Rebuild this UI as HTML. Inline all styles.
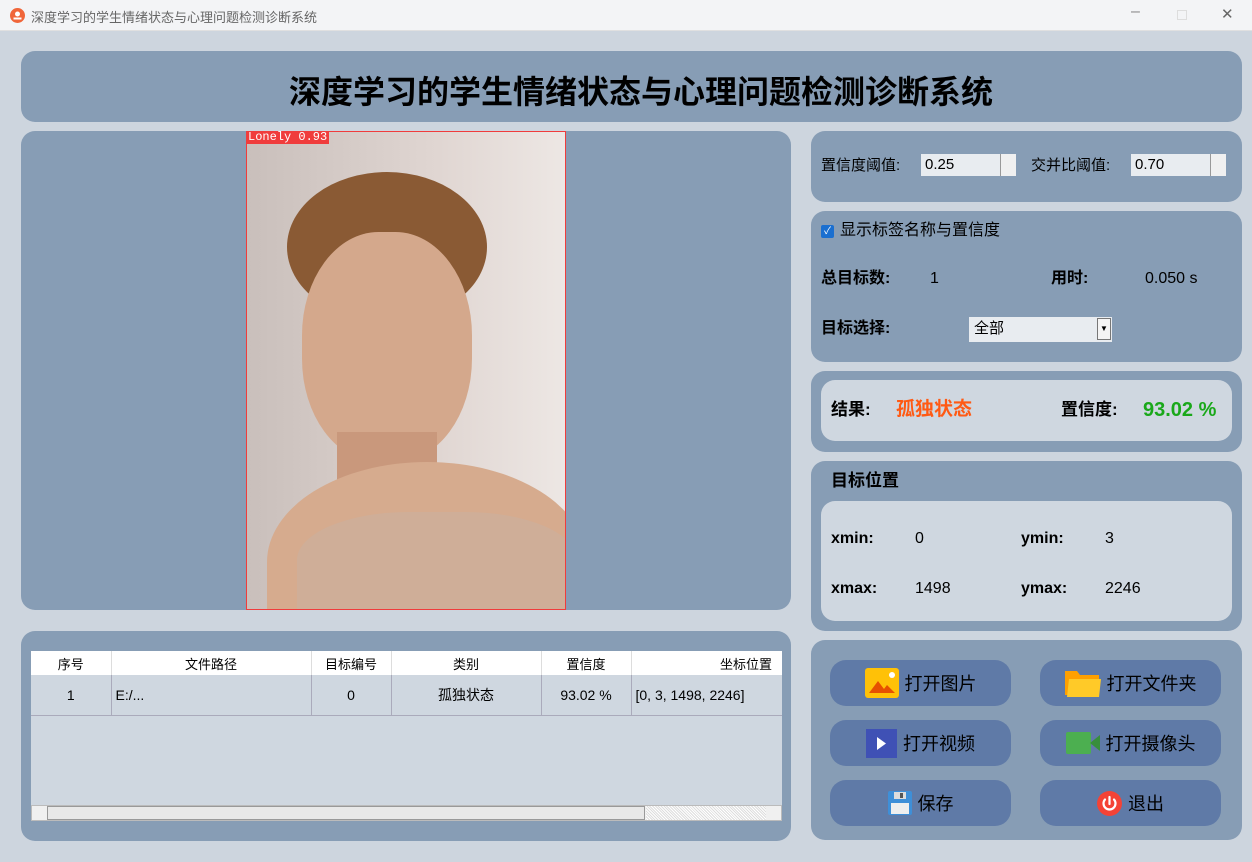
<!DOCTYPE html><html><head><meta charset="utf-8"><style>
*{margin:0;padding:0;box-sizing:border-box}
body{width:1252px;height:862px;background:#cdd5de;font-family:"Liberation Sans","Noto Sans CJK SC",sans-serif;position:relative;overflow:hidden;color:#000}
.tb{position:absolute;left:0;top:0;width:1252px;height:31px;background:#f3f4f6;border-bottom:1px solid #e0e0e0;font-size:13px;color:#666}
.p{position:absolute;background:#879db5;border-radius:14px}
.w{position:absolute;background:#cfd7e0;border-radius:14px}
.a{position:absolute;white-space:nowrap}
.r .a{line-height:22px}
.b{font-weight:bold}
.btn{position:absolute;width:181px;height:46px;background:#5f7aa7;border-radius:16px;font-size:18px;display:flex;align-items:center;justify-content:center;gap:6px}
.spin{position:absolute;height:22px;background:#e8ecf0;font-size:15px;padding:0 4px;line-height:22px}
.spin i{position:absolute;right:0;top:0;width:16px;height:22px;border-left:1px solid #999;background:#f0f0f0}
table{border-collapse:collapse;font-size:14px}
</style></head><body>
<div class="tb"><svg style="position:absolute;left:10px;top:8px" width="15" height="15"><circle cx="7.5" cy="7.5" r="7.5" fill="#f0663a"/><circle cx="7.5" cy="6" r="2.5" fill="#fff"/><path d="M3.5 10.5h8" stroke="#fff" stroke-width="2"/></svg><span class="a" style="left:31px;top:7px">深度学习的学生情绪状态与心理问题检测诊断系统</span>
<span class="a" style="left:1131px;top:3px;font-size:16px;color:#888">–</span><span class="a" style="left:1177px;top:10px;width:10px;height:10px;border:1px solid #ddd"></span><span class="a" style="left:1221px;top:5px;font-size:15px;color:#666">✕</span></div>
<div class="p" style="left:21px;top:51px;width:1221px;height:71px"></div>
<div class="a b" style="left:0;width:1282px;text-align:center;top:67px;font-size:32px">深度学习的学生情绪状态与心理问题检测诊断系统</div>
<div class="p" style="left:21px;top:131px;width:770px;height:479px"></div>
<div class="a" style="left:246px;top:131px;width:320px;height:479px;border:1px solid #f03c3c;background:linear-gradient(90deg,#c9bfbb,#e0d6d2 60%,#ede7e4);overflow:hidden">
<div class="a" style="left:40px;top:40px;width:200px;height:150px;border-radius:50%;background:#8a5a34"></div>
<div class="a" style="left:55px;top:100px;width:170px;height:230px;border-radius:45%;background:#d4a88c"></div>
<div class="a" style="left:90px;top:300px;width:100px;height:80px;background:#c9987c"></div>
<div class="a" style="left:20px;top:330px;width:320px;height:200px;border-radius:50% 50% 0 0;background:#d6ab8e"></div>
<div class="a" style="left:50px;top:380px;width:280px;height:120px;border-radius:40% 40% 0 0;background:#cfae98"></div>
</div>
<div class="a" style="left:246px;top:131px;height:13px;background:#f03c3c;color:#fff;font-size:12px;line-height:13px;padding:0 2px;font-family:'Liberation Mono',monospace">Lonely 0.93</div>
<div class="p" style="left:21px;top:631px;width:770px;height:210px"></div>
<div class="a" style="left:31px;top:651px;width:751px;height:170px;background:#cfd7e0;overflow:hidden">
<table style="width:751px"><tr style="background:#fff;height:24px;font-size:13px;text-align:center"><td style="width:80px">序号</td><td style="width:200px;border-left:1px solid #ddd">文件路径</td><td style="width:80px;border-left:1px solid #ddd">目标编号</td><td style="width:150px;border-left:1px solid #ddd">类别</td><td style="width:90px;border-left:1px solid #ddd">置信度</td><td style="border-left:1px solid #ddd;text-align:right;padding-right:10px">坐标位置</td></tr>
<tr style="height:40px;text-align:center;border-bottom:1px solid #aab"><td>1</td><td style="text-align:left;padding-left:4px;border-left:1px solid #aab">E:/...</td><td style="border-left:1px solid #aab">0</td><td style="border-left:1px solid #aab">孤独状态</td><td style="border-left:1px solid #aab">93.02 %</td><td style="border-left:1px solid #aab;text-align:left;padding-left:4px">[0, 3, 1498, 2246]</td></tr></table>
<div class="a" style="left:0;top:154px;width:751px;height:16px;background:#f0f0f0;border:1px solid #bbb"></div>
<div class="a" style="left:16px;top:155px;width:598px;height:14px;background:#e8e8e8;border:1px solid #999"></div>
<div class="a" style="left:615px;top:155px;width:120px;height:14px;background:repeating-linear-gradient(45deg,#ddd 0 1px,#fff 1px 2px)"></div>
</div>
<div class="r">
<div class="p" style="left:811px;top:131px;width:431px;height:71px"></div>
<div class="a" style="left:821px;top:155px;font-size:15px">置信度阈值:</div>
<div class="spin" style="left:921px;top:154px;width:95px">0.25<i></i></div>
<div class="a" style="left:1031px;top:155px;font-size:15px">交并比阈值:</div>
<div class="spin" style="left:1131px;top:154px;width:95px">0.70<i></i></div>
<div class="p" style="left:811px;top:211px;width:431px;height:151px"></div>
<div class="a" style="left:821px;top:225px;width:13px;height:13px;background:#1a6fd0;border-radius:2px;color:#fff;font-size:10px;text-align:center;line-height:13px">✓</div>
<div class="a" style="left:840px;top:220px;font-size:16px">显示标签名称与置信度</div>
<div class="a b" style="left:821px;top:268px;font-size:16px">总目标数:</div>
<div class="a" style="left:930px;top:268px;font-size:16px">1</div>
<div class="a b" style="left:1051px;top:268px;font-size:16px">用时:</div>
<div class="a" style="left:1145px;top:268px;font-size:16px">0.050 s</div>
<div class="a b" style="left:821px;top:318px;font-size:16px">目标选择:</div>
<div class="a" style="left:969px;top:317px;width:143px;height:25px;background:#e8ecf0;font-size:15px;padding:1px 5px">全部<i style="position:absolute;right:1px;top:1px;width:14px;height:22px;border:1px solid #777;background:#f4f4f4;font-size:8px;font-style:normal;text-align:center;line-height:20px">▼</i></div>
<div class="p" style="left:811px;top:371px;width:431px;height:81px"></div>
<div class="w" style="left:821px;top:380px;width:411px;height:61px"></div>
<div class="a b" style="left:831px;top:399px;font-size:17px">结果:</div>
<div class="a b" style="left:896px;top:399px;font-size:19px;color:#ff5a14">孤独状态</div>
<div class="a b" style="left:1061px;top:399px;font-size:17px">置信度:</div>
<div class="a b" style="left:1143px;top:399px;font-size:20px;color:#1aa81a">93.02 %</div>
<div class="p" style="left:811px;top:461px;width:431px;height:170px"></div>
<div class="a b" style="left:831px;top:470px;font-size:17px">目标位置</div>
<div class="w" style="left:821px;top:501px;width:411px;height:120px"></div>
<div class="a b" style="left:831px;top:528px;font-size:16px">xmin:</div><div class="a" style="left:915px;top:528px;font-size:16px">0</div>
<div class="a b" style="left:1021px;top:528px;font-size:16px">ymin:</div><div class="a" style="left:1105px;top:528px;font-size:16px">3</div>
<div class="a b" style="left:831px;top:578px;font-size:16px">xmax:</div><div class="a" style="left:915px;top:578px;font-size:16px">1498</div>
<div class="a b" style="left:1021px;top:578px;font-size:16px">ymax:</div><div class="a" style="left:1105px;top:578px;font-size:16px">2246</div>
</div>
<div class="p" style="left:811px;top:640px;width:431px;height:200px"></div>
<div class="btn" style="left:830px;top:660px"><svg width="34" height="30"><rect width="34" height="30" rx="3" fill="#ffc107"/><path d="M4 25L13 13 19 21 22 17 30 25Z" fill="#e65100"/><circle cx="27" cy="7" r="3" fill="#fff"/></svg>打开图片</div>
<div class="btn" style="left:1040px;top:660px"><svg width="36" height="28"><path d="M0 2h12l3 4h19v20H0z" fill="#ffa000"/><path d="M4 10h32l-2 18H2z" fill="#ffca28"/></svg>打开文件夹</div>
<div class="btn" style="left:830px;top:720px"><svg width="31" height="29"><rect width="31" height="29" fill="#3f51b5"/><path d="M11 8l9 6.5-9 6.5z" fill="#fff"/></svg>打开视频</div>
<div class="btn" style="left:1040px;top:720px"><svg width="34" height="22"><rect width="25" height="22" rx="2" fill="#4caf50"/><path d="M24 11l10-8v16z" fill="#388e3c"/></svg>打开摄像头</div>
<div class="btn" style="left:830px;top:780px"><svg width="24" height="24"><rect width="24" height="24" rx="2" fill="#3e8fd8"/><rect x="6" y="1" width="12" height="7" fill="#ddd"/><rect x="12" y="2" width="3" height="5" fill="#555"/><rect x="3" y="12" width="18" height="11" fill="#eee"/></svg>保存</div>
<div class="btn" style="left:1040px;top:780px"><svg width="25" height="25"><circle cx="12.5" cy="12.5" r="12.5" fill="#f44336"/><path d="M8 8.5a6 6 0 1 0 9 0M12.5 6v7" stroke="#fff" stroke-width="2.2" fill="none" stroke-linecap="round"/></svg>退出</div>
</body></html>
